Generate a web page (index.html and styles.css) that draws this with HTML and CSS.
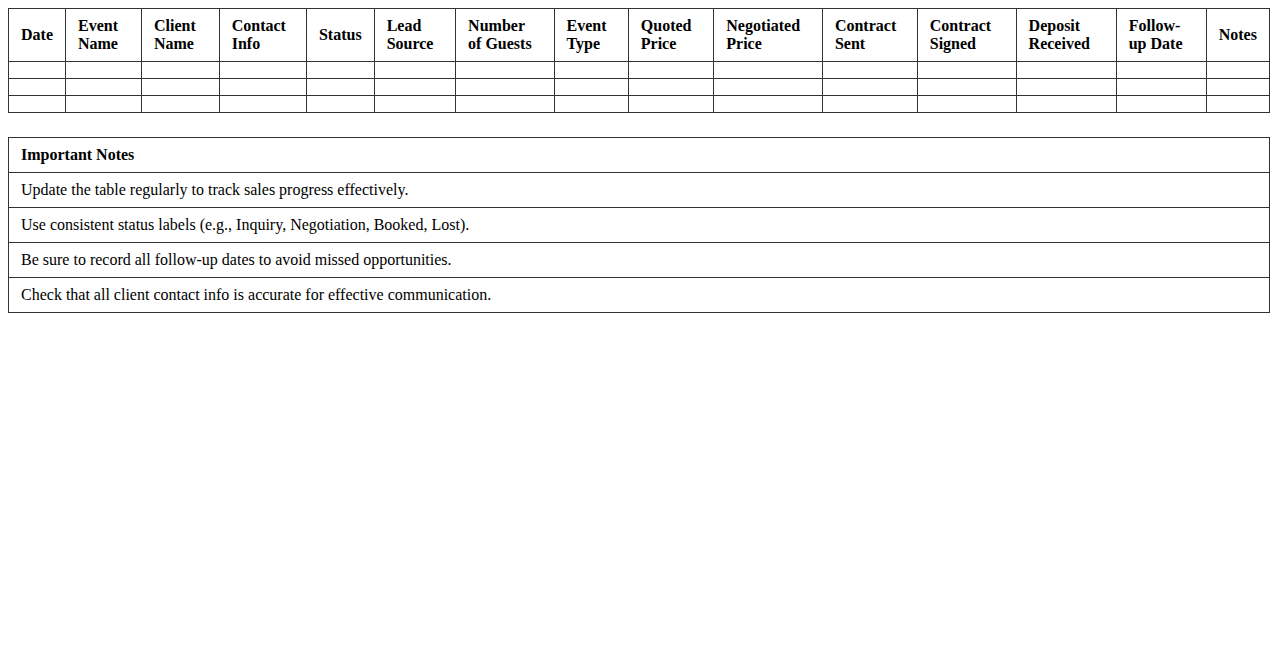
FILE: index.html
```html
<!DOCTYPE html>
<html>
<head>
<meta charset="utf-8">
<link rel="stylesheet" href="styles.css">
</head>
<body>
<table class="sales">
  <thead>
    <tr>
      <th>Date</th>
      <th>Event Name</th>
      <th>Client Name</th>
      <th>Contact Info</th>
      <th>Status</th>
      <th>Lead Source</th>
      <th>Number of Guests</th>
      <th>Event Type</th>
      <th>Quoted Price</th>
      <th>Negotiated Price</th>
      <th>Contract Sent</th>
      <th>Contract Signed</th>
      <th>Deposit Received</th>
      <th>Follow-up Date</th>
      <th>Notes</th>
    </tr>
  </thead>
  <tbody>
    <tr><td></td><td></td><td></td><td></td><td></td><td></td><td></td><td></td><td></td><td></td><td></td><td></td><td></td><td></td><td></td></tr>
    <tr><td></td><td></td><td></td><td></td><td></td><td></td><td></td><td></td><td></td><td></td><td></td><td></td><td></td><td></td><td></td></tr>
    <tr><td></td><td></td><td></td><td></td><td></td><td></td><td></td><td></td><td></td><td></td><td></td><td></td><td></td><td></td><td></td></tr>
  </tbody>
</table>
<table class="notes">
  <thead>
    <tr><th>Important Notes</th></tr>
  </thead>
  <tbody>
    <tr><td>Update the table regularly to track sales progress effectively.</td></tr>
    <tr><td>Use consistent status labels (e.g., Inquiry, Negotiation, Booked, Lost).</td></tr>
    <tr><td>Be sure to record all follow-up dates to avoid missed opportunities.</td></tr>
    <tr><td>Check that all client contact info is accurate for effective communication.</td></tr>
  </tbody>
</table>
</body>
</html>
```
FILE: styles.css
```css
body {
  margin: 8px;
  font-family: "Liberation Serif", "Times New Roman", serif;
  font-size: 16px;
  color: #000;
  background: #fff;
}
table {
  width: 100%;
  border-collapse: collapse;
}
th, td {
  border: 1px solid #333;
  padding: 8px 12px;
  text-align: left;
  vertical-align: middle;
}
th {
  font-weight: bold;
}
.sales {
  margin-bottom: 24px;
}
```
